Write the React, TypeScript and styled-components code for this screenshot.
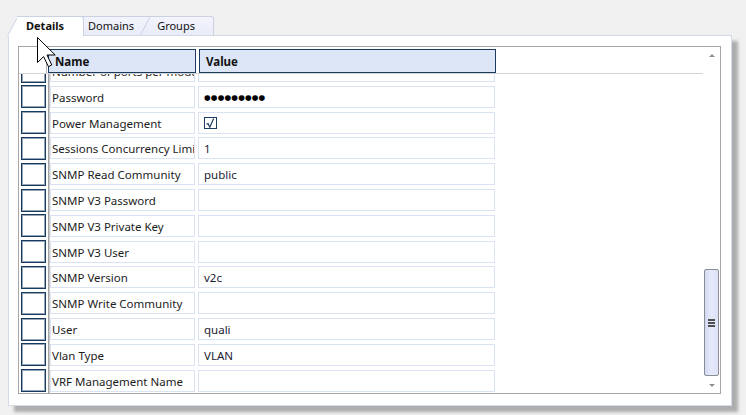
import React from 'react';
import styled, { createGlobalStyle } from 'styled-components';

const ROW_HEIGHT = 25.8;
const SCROLL_OFFSET = 15.8;

interface IRow {
  name: string;
  value?: string;
  kind?: 'text' | 'password' | 'check';
}

const rows: IRow[] = [
  { name: 'Number of ports per module' },
  { name: 'Password', kind: 'password', value: '●●●●●●●●●' },
  { name: 'Power Management', kind: 'check' },
  { name: 'Sessions Concurrency Limit', value: '1' },
  { name: 'SNMP Read Community', value: 'public' },
  { name: 'SNMP V3 Password' },
  { name: 'SNMP V3 Private Key' },
  { name: 'SNMP V3 User' },
  { name: 'SNMP Version', value: 'v2c' },
  { name: 'SNMP Write Community' },
  { name: 'User', value: 'quali' },
  { name: 'Vlan Type', value: 'VLAN' },
  { name: 'VRF Management Name' },
];

const tabs = ['Details', 'Domains', 'Groups'];

const GlobalStyle = createGlobalStyle`
  html, body {
    margin: 0;
    padding: 0;
    background: #f0f0f0;
    font-family: "Noto Sans", "Open Sans", sans-serif;
    color: #1c1c1c;
  }
  * { box-sizing: border-box; }
`;

const CheckMark: React.FC = () => (
  <svg width="11" height="10" viewBox="0 0 11 10">
    <path
      d="M1.5 6.2 L3 5.6 L4.8 9.2 L8.6 0.6"
      fill="none"
      stroke="#1d3d62"
      strokeWidth="1.2"
    />
  </svg>
);

const Cursor: React.FC = () => (
  <StyledCursor width="20" height="31" viewBox="0 0 20 31">
    <polygon
      points="0.5,0.5 0.5,25.5 6.6,19.6 11.4,29.6 14.8,28 10,18 18.2,18"
      fill="#fff"
      stroke="#000"
      strokeWidth="1"
      strokeLinejoin="miter"
    />
  </StyledCursor>
);

export default function App() {
  return (
    <Root>
      <GlobalStyle />
      <TabStrip>
        {tabs.map((t, i) => (
          <Tab key={t} $active={i === 0} $z={i === 0 ? 10 : i + 1}>
            {t}
          </Tab>
        ))}
      </TabStrip>
      <Panel>
        <Grid>
          <Main>
            <Header>
              <Corner />
              <HeaderCell $width={148}>Name</HeaderCell>
              <HeaderCell $width={297}>Value</HeaderCell>
            </Header>
            <HeaderLine />
            <Body>
              <RowList>
                {rows.map(r => (
                  <Row key={r.name}>
                    <Selector />
                    <Divider />
                    <NameCell>{r.name}</NameCell>
                    <ValueCell>
                      {r.kind === 'check' ? (
                        <CheckBox>
                          <CheckMark />
                        </CheckBox>
                      ) : r.kind === 'password' ? (
                        <Dots>{r.value}</Dots>
                      ) : (
                        r.value
                      )}
                    </ValueCell>
                  </Row>
                ))}
              </RowList>
            </Body>
          </Main>
          <ScrollBar>
            <ScrollButton>
              <Arrow $up />
            </ScrollButton>
            <Track>
              <Thumb $top={206} $height={107}>
                <Grip />
              </Thumb>
            </Track>
            <ScrollButton>
              <Arrow />
            </ScrollButton>
          </ScrollBar>
        </Grid>
      </Panel>
      <Cursor />
    </Root>
  );
}

const Root = styled.div`
  position: relative;
  width: 746px;
  height: 415px;
  padding: 16px 0 0 7px;
  overflow: hidden;
`;

const TabStrip = styled.div`
  position: relative;
  z-index: 2;
  display: flex;
  align-items: flex-start;
  height: 19px;
`;

const Tab = styled.div<{ $active?: boolean; $z: number }>`
  position: relative;
  z-index: ${props => props.$z};
  display: flex;
  align-items: center;
  height: ${props => (props.$active ? 20 : 19)}px;
  margin-left: -13px;
  padding: 0 19px 1px 17px;
  font-size: 11px;
  font-weight: ${props => (props.$active ? 700 : 400)};
  color: #111;
  &:first-child {
    margin-left: 0;
    padding: 0 20px 1px 19px;
  }
  &::before {
    content: '';
    position: absolute;
    left: 0;
    top: 0;
    bottom: 0;
    width: 16px;
    background: ${props =>
      props.$active ? '#fff' : 'linear-gradient(#f3f4fc, #e9ecf8)'};
    border-left: 1px solid #c9d1e3;
    border-top: 1px solid #c9d1e3;
    transform: skewX(-28deg);
    transform-origin: bottom left;
    z-index: -1;
  }
  &::after {
    content: '';
    position: absolute;
    left: 10px;
    right: 0;
    top: 0;
    bottom: 0;
    background: ${props =>
      props.$active ? '#fff' : 'linear-gradient(#f3f4fc, #e9ecf8)'};
    border-top: 1px solid #c9d1e3;
    border-right: 1px solid #c9d1e3;
    border-top-right-radius: 3px;
    z-index: -1;
  }
`;

const Panel = styled.div`
  width: 724px;
  height: 371px;
  margin-left: 1px;
  padding: 10px 10px 11px 9px;
  background: #fff;
  border: 1px solid #d3dbea;
  box-shadow: 6px 6px 3px rgba(0, 0, 0, 0.28);
`;

const Grid = styled.div`
  display: flex;
  width: 703px;
  height: 348px;
  border: 1px solid #a7a7a7;
  background: #fff;
`;

const Main = styled.div`
  flex: 1;
  display: flex;
  flex-direction: column;
  min-width: 0;
`;

const Header = styled.div`
  display: flex;
  align-items: flex-start;
  height: 26px;
  padding-top: 2px;
`;

const Corner = styled.div`
  flex: 0 0 28px;
  align-self: stretch;
  margin-top: -2px;
  border-right: 1px solid #b4b4b4;
  margin-right: 1px;
`;

const HeaderCell = styled.div<{ $width: number }>`
  flex: 0 0 ${props => props.$width}px;
  height: 24px;
  margin-right: 3px;
  padding-left: 6px;
  display: flex;
  align-items: center;
  background: #dce6f6;
  border: 1px solid #1b3c60;
  font-size: 11.5px;
  font-weight: 700;
  color: #111;
`;

const HeaderLine = styled.div`
  height: 1px;
  background: #d4d4d4;
`;

const Body = styled.div`
  flex: 1;
  overflow: hidden;
`;

const RowList = styled.div`
  margin-top: -${SCROLL_OFFSET}px;
`;

const Row = styled.div`
  display: flex;
  align-items: center;
  height: ${ROW_HEIGHT}px;
  padding-left: 2px;
`;

const Selector = styled.div`
  flex: 0 0 25px;
  height: 23px;
  border: 1px solid #173a5f;
  box-shadow: inset 0 0 0 1px rgba(23, 58, 95, 0.45);
  margin-right: 2px;
`;

const Divider = styled.div`
  flex: 0 0 2px;
  align-self: stretch;
  background: linear-gradient(to right, #a2a2a2 50%, #cdcdcd 50%);
`;

const Cell = styled.div`
  height: 22px;
  display: flex;
  align-items: center;
  padding-top: 1px;
  border: 1px solid #dae3f3;
  font-size: 11.5px;
  white-space: nowrap;
  overflow: hidden;
`;

const NameCell = styled(Cell)`
  flex: 0 0 145px;
  padding-left: 1px;
  margin-right: 3px;
`;

const ValueCell = styled(Cell)`
  flex: 0 0 297px;
  padding-left: 5px;
  color: #1b2233;
`;

const CheckBox = styled.span`
  display: flex;
  align-items: center;
  justify-content: center;
  width: 13px;
  height: 12px;
  border: 1px solid #1d3d62;
`;

const Dots = styled.span`
  font-family: "DejaVu Sans", sans-serif;
  font-size: 7.6px;
  letter-spacing: 0.2px;
  color: #000;
`;

const ScrollBar = styled.div`
  flex: 0 0 17px;
  display: flex;
  flex-direction: column;
`;

const ScrollButton = styled.div`
  height: 16px;
  display: flex;
  align-items: center;
  justify-content: center;
`;

const Arrow = styled.span<{ $up?: boolean }>`
  width: 0;
  height: 0;
  border-left: 3px solid transparent;
  border-right: 3px solid transparent;
  ${props =>
    props.$up
      ? 'border-bottom: 3px solid #8f8f8f;'
      : 'border-top: 3px solid #8f8f8f;'}
`;

const Track = styled.div`
  flex: 1;
`;

const Thumb = styled.div<{ $top: number; $height: number }>`
  margin-top: ${props => props.$top}px;
  margin-left: 1px;
  width: 15px;
  height: ${props => props.$height}px;
  border: 1px solid #8d8e93;
  border-radius: 2px;
  background: linear-gradient(to right, #d3d9f3, #e6e9fb 45%, #dde2f8);
  display: flex;
  align-items: center;
  justify-content: center;
`;

const Grip = styled.div`
  width: 7px;
  height: 8px;
  background: repeating-linear-gradient(#505050 0 2px, transparent 2px 3px);
`;

const StyledCursor = styled.svg`
  position: absolute;
  left: 37px;
  top: 37px;
  z-index: 20;
`;
